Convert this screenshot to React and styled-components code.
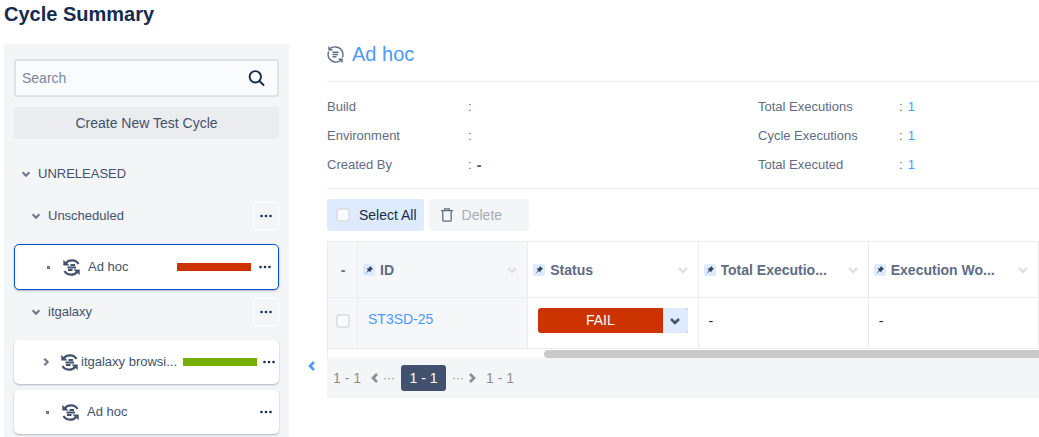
import React from "react";
import styled, { createGlobalStyle, css } from "styled-components";

const Global = createGlobalStyle`
  *, *::before, *::after { box-sizing: border-box; }
  body { margin: 0; background: #fff; color: #42526e; font: 14px/20px "Liberation Sans", Arial, sans-serif; }
  button, input, select { font: inherit; color: inherit; }
`;

const Page = styled.div`
  display: flex;
  flex-direction: column;
  min-height: 100vh;
  padding-left: 4px;
`;
const Title = styled.h1`
  margin: 0;
  height: 44px;
  padding-top: 2px;
  font-size: 20px;
  line-height: 24px;
  color: #172b4d;
`;
const Body = styled.div`
  display: flex;
  flex: 1;
`;

const Sidebar = styled.aside`
  flex: 0 0 285px;
  min-width: 0;
  padding: 15px 10px 3px;
  background: #f4f5f7;
`;
const SearchBox = styled.label`
  display: flex;
  align-items: center;
  height: 38px;
  padding: 0 12px 0 6px;
  border: 2px solid #dfe1e6;
  border-radius: 3px;
  background: #fafbfc;
`;
const SearchInput = styled.input`
  flex: 1;
  min-width: 0;
  padding: 0;
  border: 0;
  outline: 0;
  background: none;
  &::placeholder { color: #7a869a; opacity: 1; }
`;
const CreateButton = styled.button`
  display: block;
  width: 100%;
  height: 32px;
  margin: 10px 0 21px;
  padding: 0;
  border: 0;
  border-radius: 3px;
  background: #ebecf0;
`;
const Group = styled.div`
  display: flex;
  align-items: center;
  gap: 7px;
  height: 28px;
  padding-left: ${(p) => (p.$level ? 17 : 7)}px;
  margin-bottom: 14px;
  font-size: 13px;
`;
const Label = styled.span`
  flex: 1;
  min-width: 0;
  overflow: hidden;
  white-space: nowrap;
  text-overflow: ellipsis;
`;
const IconButton = styled.button`
  display: flex;
  align-items: center;
  justify-content: center;
  padding: 0;
  border: 0;
  background: none;
  color: #172b4d;
  flex-shrink: 0;
`;
const MenuButton = styled(IconButton)`
  width: 26px;
  height: 28px;
  border: 1px solid #fff;
  border-radius: 3px;
`;
const Card = styled.div`
  display: flex;
  align-items: center;
  height: 44px;
  margin-bottom: 6px;
  padding: 0 ${(p) => (p.$nested ? 4 : 7)}px 0 ${(p) => (p.$nested ? 24 : 25)}px;
  border-radius: 5px;
  background: #fff;
  box-shadow: 0 1px 2px rgba(9, 30, 66, 0.3);
  font-size: 13px;
  ${(p) => p.$active && css`
    height: 46px;
    margin-bottom: 8px;
    border: 1px solid #0052cc;
  `}
`;
const Lead = styled.span`
  display: flex;
  align-items: center;
  justify-content: center;
  width: 16px;
  margin-right: 7px;
`;
const Dot = styled.span`
  width: 3px;
  height: 3px;
  background: #6b778c;
`;
const CardLabel = styled(Label)`
  margin-left: ${(p) => (p.$nested ? 3 : 8)}px;
`;
const Progress = styled.span`
  width: 74px;
  height: 8px;
  margin-right: ${(p) => (p.$nested ? 6 : 8)}px;
  background: ${(p) => p.$color};
  flex-shrink: 0;
`;

const Divider = styled.div`
  display: flex;
  justify-content: center;
  flex: 0 0 38px;
  padding: 315px 0 0 7px;
`;
const Collapse = styled(IconButton)`
  width: 14px;
  height: 14px;
  color: #4c9aff;
`;

const Main = styled.main`
  flex: 1;
  min-width: 0;
`;
const Heading = styled.h2`
  display: flex;
  align-items: center;
  gap: 8px;
  height: 38px;
  margin: 0;
  padding-bottom: 17px;
  border-bottom: 1px solid #ebecf0;
  font-size: 20px;
  font-weight: 400;
`;
const HeadingLink = styled.a`
  color: #4c9aff;
  text-decoration: none;
`;
const Details = styled.dl`
  display: grid;
  grid-template-columns: 1fr 281px;
  margin: 0;
  padding: 10px 0 9px;
  border-bottom: 1px solid #ebecf0;
  font-size: 13px;
  color: #5e6c84;
`;
const Field = styled.div`
  display: flex;
  align-items: center;
  height: 29px;
`;
const Term = styled.dt`
  width: 141px;
`;
const Value = styled.dd`
  display: flex;
  gap: 5px;
  margin: 0;
`;
const Strong = styled.b`
  font-size: 14px;
  color: #42526e;
`;
const CountLink = styled.a`
  color: #4c9aff;
  text-decoration: none;
`;

const Toolbar = styled.div`
  display: flex;
  gap: 5px;
  padding: 10px 0;
`;
const SelectAll = styled.label`
  display: flex;
  align-items: center;
  gap: 9px;
  height: 32px;
  padding: 0 7px 0 9px;
  border-radius: 3px;
  background: #deebff;
  color: #172b4d;
`;
const Checkbox = styled.input.attrs({ type: "checkbox" })`
  appearance: none;
  display: block;
  width: 14px;
  height: 14px;
  margin: 0;
  border: 2px solid #dfe1e6;
  border-radius: 3px;
  background: #fafbfc;
`;
const DeleteButton = styled.button`
  display: flex;
  align-items: center;
  gap: 9px;
  width: 100px;
  height: 32px;
  padding: 0 12px;
  border: 0;
  border-radius: 3px;
  background: #f4f5f7;
  color: #a5adba;
`;

const TableWrap = styled.div`
  border-left: 1px solid #ebecf0;
  overflow: hidden;
`;
const Table = styled.table`
  width: 100%;
  table-layout: fixed;
  border-collapse: separate;
  border-spacing: 0;
  border-top: 1px solid #ebecf0;
`;
const Cell = styled.td`
  height: ${(p) => (p.as === "th" ? 56 : 51)}px;
  width: ${(p) => (p.$narrow ? "30px" : "auto")};
  padding: 0 10px ${(p) => (p.as === "th" ? 0 : 5)}px;
  border: solid #ebecf0;
  border-width: 0 1px 1px 0;
  background: ${(p) => (p.$frozen ? "#f6f7f9" : "#fff")};
  color: #172b4d;
  text-align: left;
  ${(p) => p.$narrow && css`
    padding-left: 8px;
    padding-right: 7px;
    text-align: center;
    color: #5e6c84;
  `}
`;
const HeadInner = styled.div`
  display: flex;
  align-items: center;
  gap: 5px;
  margin: 0 -1px 0 -5px;
  font-weight: 700;
  color: #5e6c84;
`;
const Pin = styled(IconButton)`
  width: 12px;
  height: 12px;
  border-radius: 2px;
  background: #deebff;
`;
const HeadMenu = styled(IconButton)`
  width: 12px;
  height: 12px;
  color: #dfe1e6;
`;
const IssueLink = styled.a`
  display: block;
  padding-bottom: 4px;
  color: #4c9aff;
  text-decoration: none;
`;
const Status = styled.div`
  display: flex;
  height: 25px;
  border-radius: 3px;
  overflow: hidden;
  background: #cc3300;
`;
const StatusText = styled.span`
  flex: 1;
  line-height: 25px;
  text-align: center;
  color: #fff;
`;
const StatusMenu = styled(IconButton)`
  width: 25px;
  background: #deebff;
  color: #42526e;
`;
const ScrollTrack = styled.div`
  height: 9px;
  padding: 1px 0 0 216px;
`;
const ScrollThumb = styled.div`
  height: 8px;
  border-radius: 4px 0 0 4px;
  background: #c9c9c9;
`;
const Pagination = styled.nav`
  display: flex;
  align-items: center;
  height: 40px;
  padding-left: 6px;
  background: #f4f5f7;
  color: #8c8c8c;
`;
const PageButton = styled.button`
  width: 45px;
  height: 26px;
  padding: 0;
  border: 0;
  border-radius: 3px;
  background: #42526e;
  color: #fff;
`;
const Step = styled(IconButton)`
  gap: 2px;
  margin: ${(p) => (p.$next ? "0 8px 0 6px" : "0 6px 0 8px")};
  font-size: 12px;
  color: #8c8c8c;
`;

const chevrons = {
  down: "M2 4L6 8L10 4",
  right: "M4 2L8 6L4 10",
  left: "M8 2L4 6L8 10",
};
const Chevron = ({ dir = "down", color = "currentColor", size = 10, weight = 2.6 }) => (
  <svg width={size} height={size} viewBox="0 0 12 12" fill="none" stroke={color} strokeWidth={weight} aria-hidden="true">
    <path d={chevrons[dir]} />
  </svg>
);
const Dots = () => (
  <svg width="12" height="4" viewBox="0 0 12 4" fill="currentColor" aria-hidden="true">
    <circle cx="1.5" cy="2" r="1.3" /><circle cx="6" cy="2" r="1.3" /><circle cx="10.5" cy="2" r="1.3" />
  </svg>
);
const CycleIcon = () => (
  <svg width="17" height="17" viewBox="0 0 17 17" fill="none" stroke="#42526e" strokeWidth="2.2" aria-hidden="true">
    <path d="M3 4.200C5.500 0.300 13 0.300 15.500 5M14 12.800C11.500 16.700 4 16.700 1.500 12" />
    <path d="M0.300 1V6.500H6.500L4.800 4.800ZM16.700 16V10.500H10.500L12.200 12.200Z" fill="#42526e" stroke="none" />
    <path d="M7.500 6H12M4.500 8.500H13M5 11H9.500" strokeWidth="1.800" />
  </svg>
);
const CycleOutlineIcon = () => (
  <svg width="17" height="17" viewBox="0 0 17 17" fill="none" stroke="#5e6c84" strokeWidth="1.400" aria-hidden="true">
    <path d="M2.200 3.200C6 -0.400 12.500 0.400 15 4.800C16.300 7.200 16.200 9.400 15.300 11.500M14.800 13.800C11 17.400 4.500 16.600 2 12.200C0.700 9.800 0.800 7.600 1.700 5.500" />
    <path d="M2 0.500V3.700H5.500M15 16.500V13.300H11.500" />
    <path d="M5.500 6.200H11.500M5.500 8.500H11M5.500 10.800H9.500" />
  </svg>
);
const SearchIcon = () => (
  <svg width="17" height="17" viewBox="0 0 17 17" fill="none" stroke="#172b4d" strokeWidth="1.900" aria-hidden="true">
    <circle cx="7.300" cy="6.800" r="5.700" /><path d="M11.400 11L15.500 15" strokeLinecap="round" />
  </svg>
);
const TrashIcon = () => (
  <svg width="12" height="14" viewBox="0 0 12 14" fill="none" stroke="#5e6c84" strokeWidth="1.300" aria-hidden="true">
    <path d="M0 2.700H12M3.700 2.500V0.800H8.300V2.500M1.800 3V12Q1.800 13.200 3 13.200H9Q10.200 13.200 10.200 12V3" />
  </svg>
);
const PinIcon = () => (
  <svg width="8" height="8" viewBox="0 0 8 8" aria-hidden="true">
    <path d="M5 0L8 3L7 3.400L5.600 4.800L5.400 6.500L3.700 5L0.500 7.700L3 4.300L1.400 2.600L3.200 2.400L4.600 1Z" fill="#344563" />
  </svg>
);

const Item = ({ label, color, active, nested }) => (
  <Card $active={active} $nested={nested}>
    <Lead>{nested ? <Chevron dir="right" color="#6b778c" /> : <Dot />}</Lead>
    <CycleIcon />
    <CardLabel $nested={nested}>{label}</CardLabel>
    {color && <Progress $color={color} $nested={nested} />}
    <IconButton aria-label={`${label} actions`}><Dots /></IconButton>
  </Card>
);
const Head = ({ label, frozen }) => (
  <Cell as="th" $frozen={frozen}>
    <HeadInner>
      <Pin aria-label={`Pin ${label}`}><PinIcon /></Pin>
      <Label>{label}</Label>
      <HeadMenu aria-label={`${label} menu`}><Chevron size={12} /></HeadMenu>
    </HeadInner>
  </Cell>
);

const left = ["Build", "Environment", "Created By"];
const right = ["Total Executions", "Cycle Executions", "Total Executed"];

export default function App() {
  return (
    <Page>
      <Global />
      <Title>Cycle Summary</Title>
      <Body>
        <Sidebar>
          <SearchBox>
            <SearchInput type="text" placeholder="Search" aria-label="Search" />
            <SearchIcon />
          </SearchBox>
          <CreateButton>Create New Test Cycle</CreateButton>
          <Group><Chevron color="#6b778c" /><Label>UNRELEASED</Label></Group>
          <Group $level={1}>
            <Chevron color="#6b778c" /><Label>Unscheduled</Label>
            <MenuButton aria-label="Unscheduled actions"><Dots /></MenuButton>
          </Group>
          <Item label="Ad hoc" color="#cc3300" active />
          <Group $level={1}>
            <Chevron color="#6b778c" /><Label>itgalaxy</Label>
            <MenuButton aria-label="itgalaxy actions"><Dots /></MenuButton>
          </Group>
          <Item label="itgalaxy browsi..." color="#75b000" nested />
          <Item label="Ad hoc" />
        </Sidebar>
        <Divider>
          <Collapse aria-label="Collapse sidebar"><Chevron dir="left" size={12} /></Collapse>
        </Divider>
        <Main>
          <Heading><CycleOutlineIcon /><HeadingLink href="#cycle">Ad hoc</HeadingLink></Heading>
          <Details>
            {left.map((name, i) => (
              <React.Fragment key={name}>
                <Field><Term>{name}</Term><Value>:{i === 2 && <Strong>-</Strong>}</Value></Field>
                <Field><Term>{right[i]}</Term><Value>:<CountLink href="#executions">1</CountLink></Value></Field>
              </React.Fragment>
            ))}
          </Details>
          <Toolbar>
            <SelectAll><Checkbox />Select All</SelectAll>
            <DeleteButton disabled><TrashIcon />Delete</DeleteButton>
          </Toolbar>
          <TableWrap>
            <Table>
              <thead>
                <tr>
                  <Cell as="th" $narrow $frozen>-</Cell>
                  <Head label="ID" frozen />
                  <Head label="Status" />
                  <Head label="Total Executio..." />
                  <Head label="Execution Wo..." />
                </tr>
              </thead>
              <tbody>
                <tr>
                  <Cell $narrow $frozen><Checkbox aria-label="Select ST3SD-25" /></Cell>
                  <Cell $frozen><IssueLink href="#issue">ST3SD-25</IssueLink></Cell>
                  <Cell>
                    <Status>
                      <StatusText>FAIL</StatusText>
                      <StatusMenu aria-label="Change status"><Chevron size={12} /></StatusMenu>
                    </Status>
                  </Cell>
                  <Cell>-</Cell>
                  <Cell>-</Cell>
                </tr>
              </tbody>
            </Table>
            <ScrollTrack><ScrollThumb /></ScrollTrack>
          </TableWrap>
          <Pagination aria-label="Pages">
            <span>1 - 1</span>
            <Step aria-label="Previous"><Chevron dir="left" size={12} />···</Step>
            <PageButton>1 - 1</PageButton>
            <Step $next aria-label="Next">···<Chevron dir="right" size={12} /></Step>
            <span>1 - 1</span>
          </Pagination>
        </Main>
      </Body>
    </Page>
  );
}
